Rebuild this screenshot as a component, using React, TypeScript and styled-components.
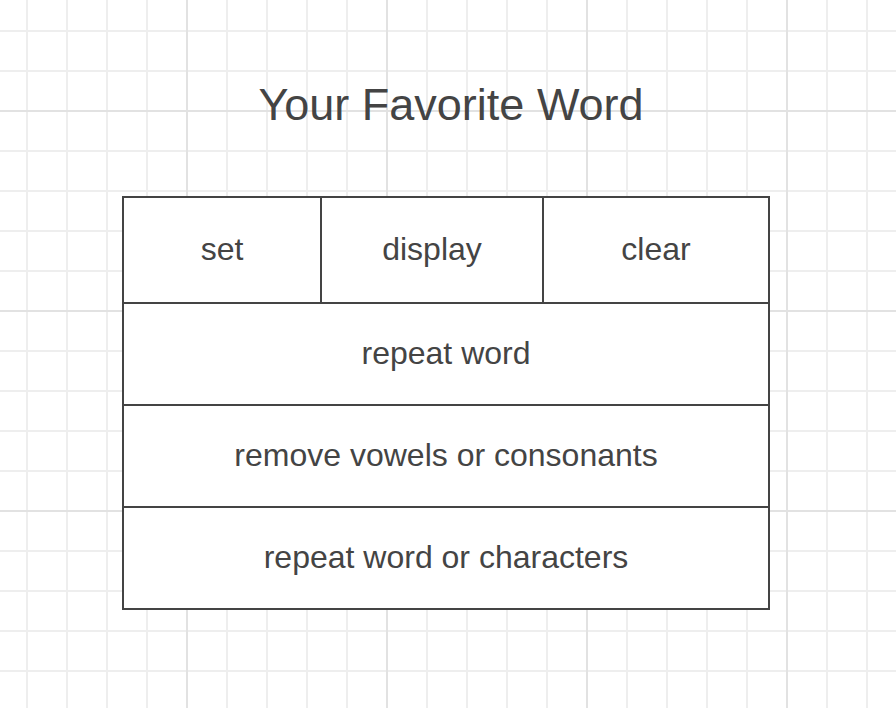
import React from "react";
import styled, { createGlobalStyle } from "styled-components";

const GlobalStyle = createGlobalStyle`
  html, body {
    margin: 0;
    padding: 0;
    height: 100%;
  }
  body {
    background-color: #ffffff;
    background-image:
      linear-gradient(to right, #e2e2e2 2px, transparent 2px),
      linear-gradient(to bottom, #e2e2e2 2px, transparent 2px),
      linear-gradient(to right, #eeeeee 2px, transparent 2px),
      linear-gradient(to bottom, #eeeeee 2px, transparent 2px);
    background-size: 200px 200px, 200px 200px, 40px 40px, 40px 40px;
    background-position: 186px 110px, 186px 110px, 26px 30px, 26px 30px;
    font-family: "Liberation Sans", Arial, sans-serif;
    color: #444444;
  }
`;

const Page = styled.main`
  width: 896px;
  height: 708px;
  display: flex;
  flex-direction: column;
  align-items: center;
  padding-top: 80px;
  box-sizing: border-box;
`;

const Title = styled.h1`
  margin: 0 0 66px 0;
  font-size: 45px;
  line-height: 50px;
  font-weight: 400;
  color: #444444;
  transform: translateX(3px);
`;

const Board = styled.div`
  display: grid;
  grid-template-columns: 196px 220px 224px;
  grid-template-rows: 104px 100px 100px 100px;
  gap: 2px;
  padding: 2px;
  background: #444444;
  transform: translateX(-2px);
`;

const Cell = styled.div<{ $wide?: boolean }>`
  grid-column: ${(p) => (p.$wide ? "1 / -1" : "auto")};
  background: #ffffff;
  display: flex;
  align-items: center;
  justify-content: center;
  padding-bottom: 2px;
  font-size: 32px;
  color: #444444;
`;

export default function App() {
  return (
    <>
      <GlobalStyle />
      <Page>
        <Title>Your Favorite Word</Title>
        <Board>
          <Cell>set</Cell>
          <Cell>display</Cell>
          <Cell>clear</Cell>
          <Cell $wide>repeat word</Cell>
          <Cell $wide>remove vowels or consonants</Cell>
          <Cell $wide>repeat word or characters</Cell>
        </Board>
      </Page>
    </>
  );
}
